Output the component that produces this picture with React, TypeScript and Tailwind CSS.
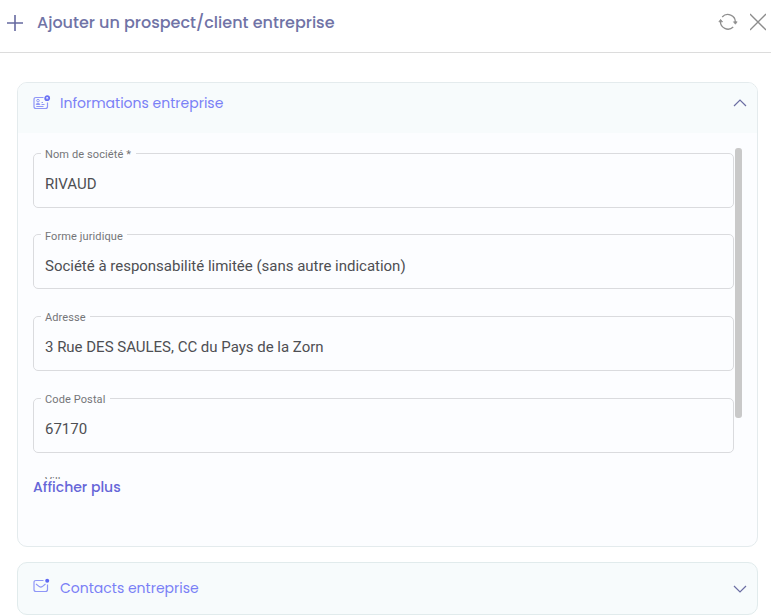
import { useState } from 'react';

interface Field {
    label: string;
    value: string;
}

const initialFields: Field[] = [
    { label: 'Nom de société *', value: 'RIVAUD' },
    { label: 'Forme juridique', value: 'Société à responsabilité limitée (sans autre indication)' },
    { label: 'Adresse', value: '3 Rue DES SAULES, CC du Pays de la Zorn' },
    { label: 'Code Postal', value: '67170' },
    { label: 'Ville', value: '' },
];

function CompanyIcon() {
    return (
        <svg width="18" height="16" viewBox="0 0 18 16" fill="none" stroke="#8f96f7" className="block shrink-0">
            <path d="M10.5 2.5H3Q1 2.5 1 4.5V11.5Q1 13.5 3 13.5H12.5Q14.5 13.5 14.5 11.5V7.5" strokeWidth="1.2" />
            <circle cx="5" cy="5.6" r="1.3" />
            <path d="M3.2 9.5Q3.2 8.3 5 8.3T6.8 9.5Z" />
            <path d="M3.3 11.5H10.5M8.5 9.5H11.5M8.5 7.5H10" />
            <circle cx="14.2" cy="3.2" r="2" stroke="#6a72f4" strokeWidth="1.8" />
            <path d="M13.4 3.2L14 3.8L15 2.7" stroke="#6a72f4" strokeWidth="0.6" />
        </svg>
    );
}

function MailIcon() {
    return (
        <svg width="18" height="16" viewBox="0 0 18 16" fill="none" stroke="#8f96f7" strokeWidth="1.2" className="block shrink-0">
            <path d="M10.5 2.5H3Q1 2.5 1 4.5V11.5Q1 13.5 3 13.5H12.5Q14.5 13.5 14.5 11.5V6.5" />
            <path d="M3 6L6.3 8.6Q7.8 9.7 9.3 8.6L12.5 6" />
            <circle cx="14.2" cy="2.7" r="2" fill="#5f68f3" stroke="none" />
        </svg>
    );
}

function RefreshIcon() {
    return (
        <svg width="20" height="18" viewBox="0 0 20 18" fill="none" stroke="#8f8f8f" className="block">
            <path d="M4.2 4A7.5 7.5 0 0 1 17.3 9.5M15.2 14A7.5 7.5 0 0 1 2.5 8" strokeWidth="1.3" />
            <path d="M0.9 8.8L2.6 6.4L4.6 8.8ZM15.5 8.8L17.4 11.2L19.1 8.8Z" fill="#8f8f8f" strokeWidth="0.8" />
        </svg>
    );
}

function Chevron({ open }: { open: boolean }) {
    return (
        <svg width="14" height="8" viewBox="0 0 14 8" fill="none" stroke="#6b6ea3" strokeWidth="1.2" className="block">
            <path d={open ? 'M1 7L7 1L13 7' : 'M1 1L7 7L13 1'} />
        </svg>
    );
}

function OutlinedField({ label, value }: Field) {
    return (
        <div className="h-[81.67px] shrink-0">
            <fieldset className="h-[60px] min-w-0 rounded-[5px] border border-[#dadbde] pl-[11px]">
                <legend className="-ml-[4.5px] h-[11px] px-[4.5px] pt-[1.2px] text-[11px] leading-[12px] tracking-[0.11px] text-[#747578]">
                    {label}
                </legend>
                <div className="pt-[15.2px] text-[15px] leading-[20px] tracking-[-0.01px] text-[#4e4f53]">{value}</div>
            </fieldset>
        </div>
    );
}

export default function App() {
    const [companyOpen, setCompanyOpen] = useState(true);
    const [contactsOpen, setContactsOpen] = useState(false);

    return (
        <div className="h-[616px] w-[771px] overflow-hidden bg-white font-['Roboto',sans-serif]">
            <header className="flex h-[53px] items-start border-b border-[#dcdcdc] pl-[7px] pr-[5px] text-[#7073a6]">
                <svg width="16" height="16" viewBox="0 0 16 16" fill="none" stroke="#6669a0" strokeWidth="1.6" className="mt-[15px] block">
                    <path d="M8 0V16M0 8H16" />
                </svg>
                <h1 className="ml-[14px] mt-[11px] whitespace-nowrap font-['Poppins','Inter',sans-serif] text-[16px] font-medium leading-[24px]">
                    Ajouter un prospect/client entreprise
                </h1>
                <div className="ml-auto mt-[13px] flex items-center gap-[12px]">
                    <button>
                        <RefreshIcon />
                    </button>
                    <button>
                        <svg width="16" height="18" viewBox="0 0 16 18" stroke="#8c8c8c" strokeWidth="1.3" className="block">
                            <path d="M0 1L16 17M16 1L0 17" />
                        </svg>
                    </button>
                </div>
            </header>

            <main className="flex flex-col gap-[15px] pl-[17px] pr-[13px] pt-[29px]">
                <section className="h-[465px] overflow-hidden rounded-[10px] border border-[#e4ebed] bg-[#fcfdff]">
                    <button
                        onClick={() => setCompanyOpen(!companyOpen)}
                        className="flex h-[50px] w-full items-start bg-[#f7fbfc] pl-[15px] pr-[10px] pt-[8px] text-[#7a80f6]"
                    >
                        <div className="mt-[4px]">
                            <CompanyIcon />
                        </div>
                        <span className="ml-[9px] whitespace-nowrap font-['Poppins','Inter',sans-serif] text-[14px] leading-[24px]">
                            Informations entreprise
                        </span>
                        <div className="ml-auto mt-[8px]">
                            <Chevron open={companyOpen} />
                        </div>
                    </button>
                    {companyOpen && (
                        <div className="pl-[15px] pr-[15px] pt-[15px]">
                            <div className="flex h-[331px] overflow-hidden">
                                <div className="-mt-[0.3px] flex w-[701px] flex-col">
                                    {initialFields.map((field) => (
                                        <OutlinedField key={field.label} {...field} />
                                    ))}
                                </div>
                                <div className="ml-[1px] h-[270px] w-[7px] rounded-[3px] bg-[#c9c9c9]" />
                            </div>
                            <button className="block whitespace-nowrap font-['Poppins','Inter',sans-serif] text-[14px] font-medium leading-[16px] text-[#6666d8]">
                                Afficher plus
                            </button>
                        </div>
                    )}
                </section>

                <section className="h-[53px] overflow-hidden rounded-[10px] border border-[#e1ebec] bg-[#f7fbfc]">
                    <button
                        onClick={() => setContactsOpen(!contactsOpen)}
                        className="flex h-[51px] w-full items-start pl-[15px] pr-[10px] pt-[13px] text-[#7a80f6]"
                    >
                        <div className="mt-[2px]">
                            <MailIcon />
                        </div>
                        <span className="ml-[9px] whitespace-nowrap font-['Poppins','Inter',sans-serif] text-[14px] leading-[24px]">
                            Contacts entreprise
                        </span>
                        <div className="ml-auto mt-[9px]">
                            <Chevron open={contactsOpen} />
                        </div>
                    </button>
                </section>
            </main>
        </div>
    );
}
